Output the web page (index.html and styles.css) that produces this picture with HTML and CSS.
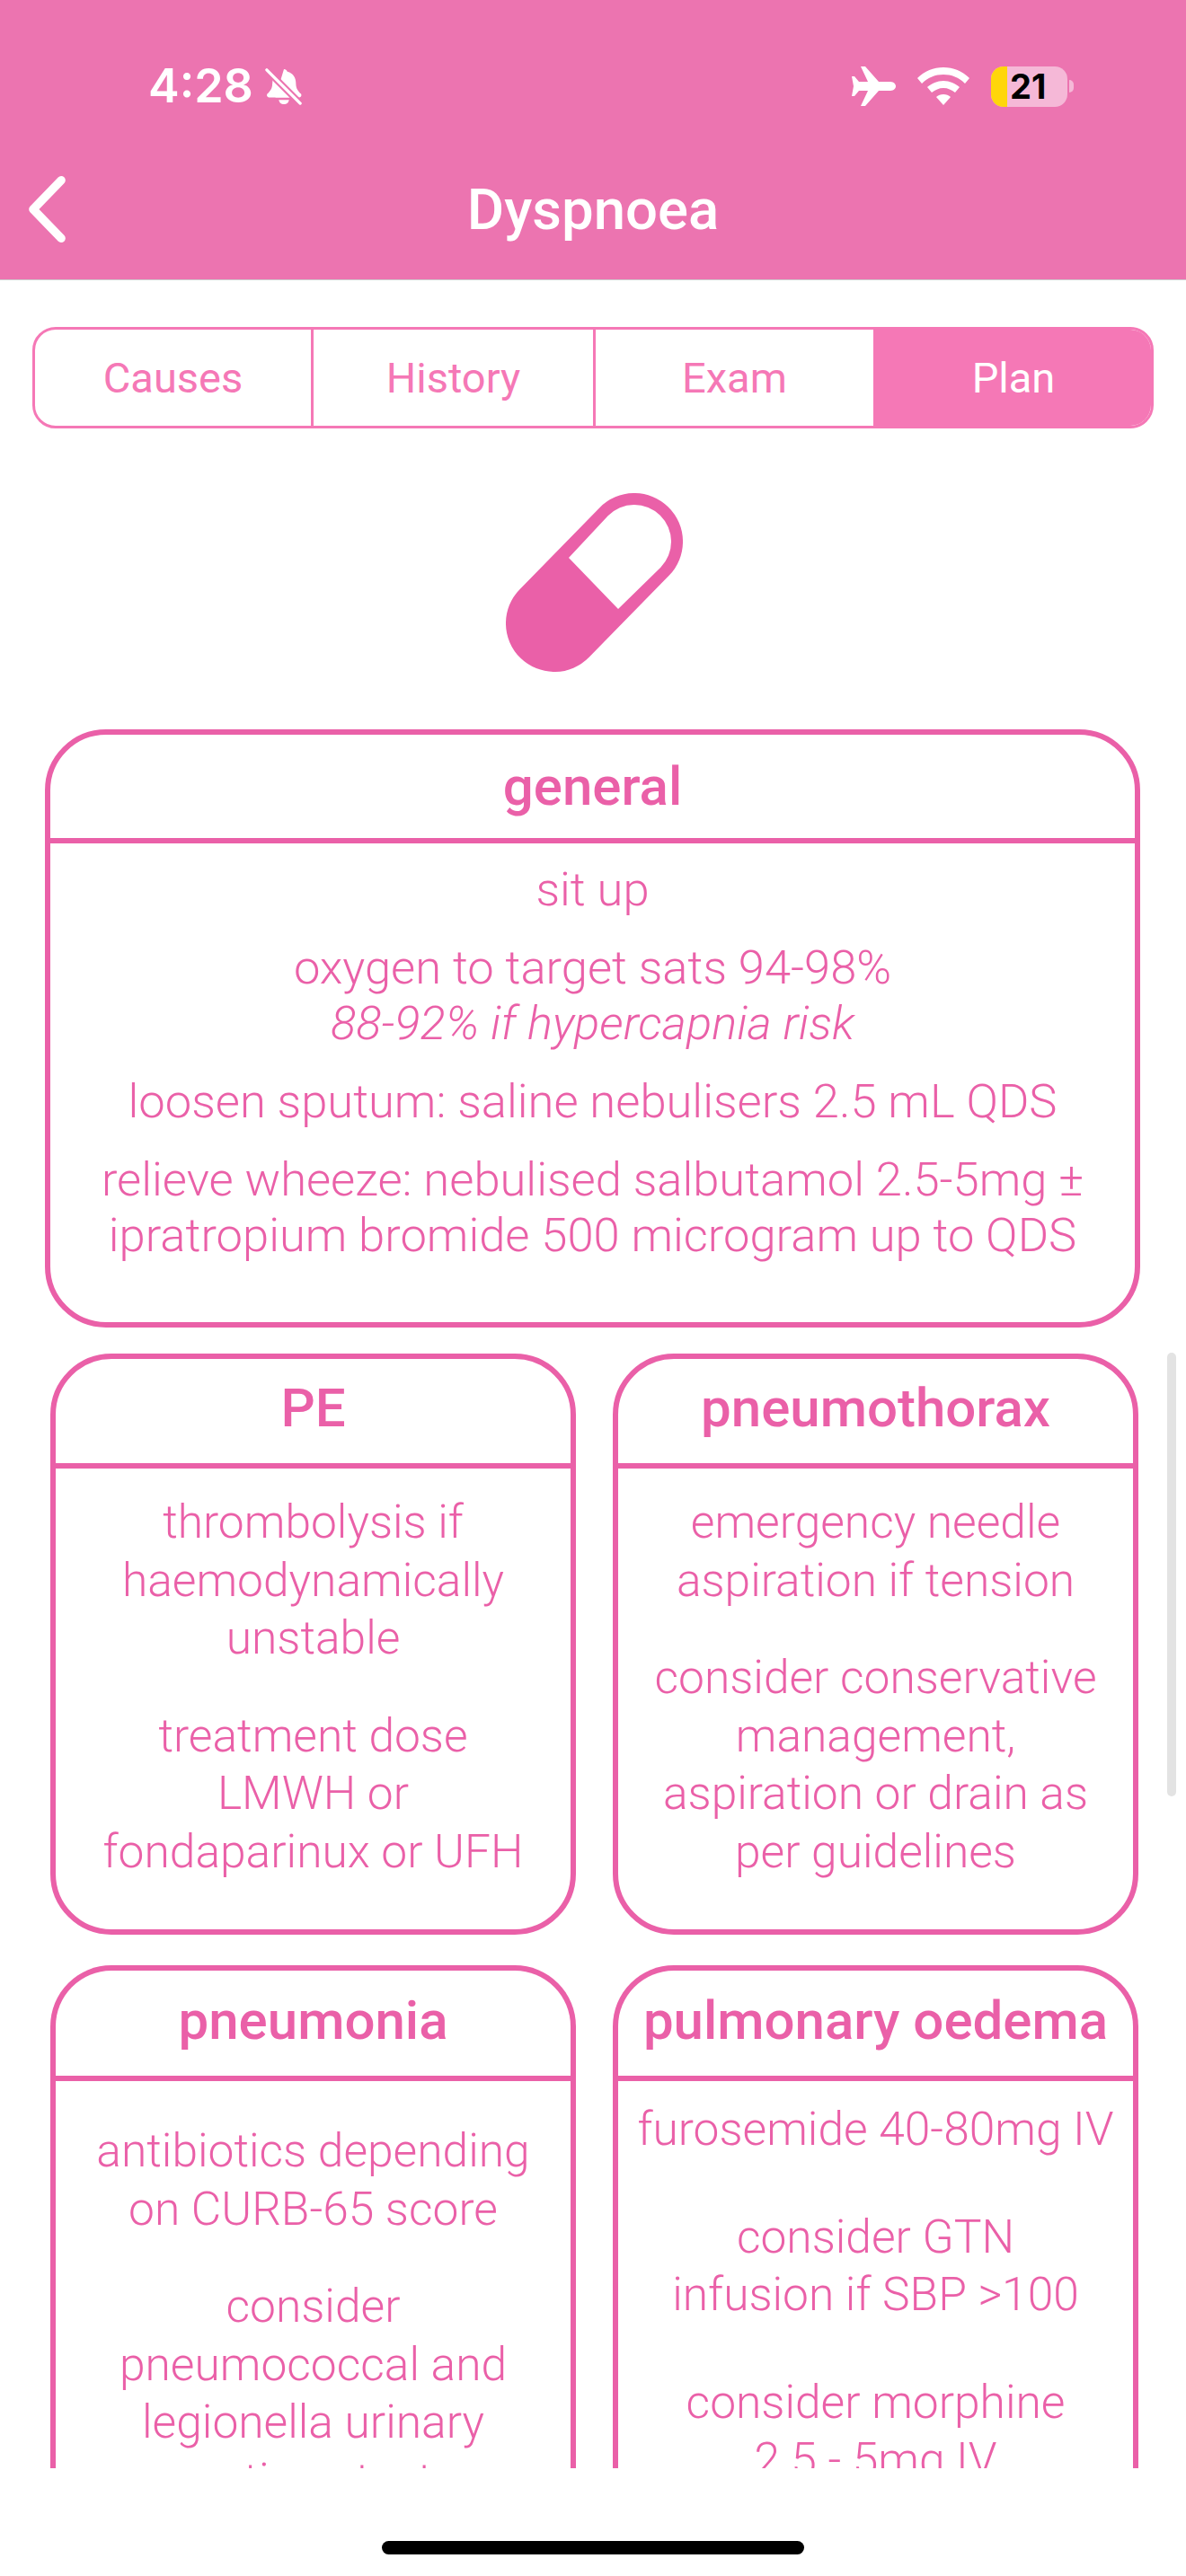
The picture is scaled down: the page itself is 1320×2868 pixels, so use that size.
FILE: index.html
```html
<!DOCTYPE html>
<html lang="en">
<head>
	<meta charset="UTF-8"/>
	<title>Dyspnoea</title>
	<link rel="stylesheet" href="styles.css">
</head>
<body>

<header class="topbar">
	<div class="status">
		<div class="status-left">
			<span class="time">4:28</span>
			<svg class="bell" viewBox="0 0 44 44"><path d="M22 2c2 0 3 1 4 3 7 2 10 7 10 14 0 6 3 9 6 12 1 2 0 4-2 4H12z" fill="#fff"/><path d="M9 14l-.5 5c0 6-3 9-6 12-1 2 0 4 2 4h24z" fill="#fff"/><path d="M16 38h12c-1 4-3 5-6 5s-5-1-6-5z" fill="#fff"/><path d="M2 3l39 39" stroke="#ec74b0" stroke-width="8"/><path d="M2 3l39 39" stroke="#fff" stroke-width="3.5" stroke-linecap="round"/></svg>
		</div>
		<div class="status-right">
			<svg class="plane" viewBox="0 0 50 44"><path d="M11 0h5l15 17h13c4 0 6 3 6 5s-2 5-6 5H31L16 44h-5l8-17H9l-5 6H1l2-11-2-11h3l5 6h10z" fill="#fff"/></svg>
			<svg class="wifi" viewBox="0 0 58 42"><path d="M29 0c11 0 21 4 29 12l-5 6C46 11 38 8 29 8S12 11 5 18L0 12C8 4 18 0 29 0z" fill="#fff"/><path d="M29 15c7 0 13 3 18 7l-5 6c-4-3-8-5-13-5s-9 2-13 5l-5-6c5-4 11-7 18-7z" fill="#fff"/><path d="M29 30c3 0 6 1 8 3l-8 9-8-9c2-2 5-3 8-3z" fill="#fff"/></svg>
			<div class="battery">
				<div class="battery-body"><span class="battery-level"></span><span class="battery-num">21</span></div>
				<span class="battery-cap"></span>
			</div>
		</div>
	</div>
	<div class="navbar">
		<svg class="back" viewBox="0 0 44 70"><path d="M36 6L8 35l28 29" fill="none" stroke="#fff" stroke-width="8.5" stroke-linecap="round" stroke-linejoin="round"/></svg>
		<h1>Dyspnoea</h1>
	</div>
</header>

<nav class="tabs">
	<a>Causes</a>
	<a>History</a>
	<a>Exam</a>
	<a class="active">Plan</a>
</nav>

<main class="scroller">
	<svg class="pill" viewBox="0 0 197 199">
		<path d="M104.4 16.2A54 54 0 0 1 181.6 91.8L92.6 182.8A54 54 0 0 1 15.4 107.2Z" fill="#ea60a8"/>
		<path d="M70 72L113.7 25.3A41 41 0 0 1 172.3 82.7L125 129Z" fill="#fff"/>
	</svg>

	<section class="card card-general">
		<h2>general</h2>
		<div class="card-body">
			<p>sit up</p>
			<p>oxygen to target sats 94-98%<br><em>88-92% if hypercapnia risk</em></p>
			<p>loosen sputum: saline nebulisers 2.5 mL QDS</p>
			<p>relieve wheeze: nebulised salbutamol 2.5-5mg &plusmn;<br>ipratropium bromide 500 microgram up to QDS</p>
		</div>
	</section>

	<div class="grid">
		<section class="card">
			<h2>PE</h2>
			<div class="card-body">
				<p>thrombolysis if<br>haemodynamically<br>unstable</p>
				<p>treatment dose<br>LMWH or<br>fondaparinux or UFH</p>
			</div>
		</section>
		<section class="card">
			<h2>pneumothorax</h2>
			<div class="card-body">
				<p>emergency needle<br>aspiration if tension</p>
				<p>consider conservative<br>management,<br>aspiration or drain as<br>per guidelines</p>
			</div>
		</section>
		<section class="card card-low">
			<h2>pneumonia</h2>
			<div class="card-body body-pneumonia">
				<p>antibiotics depending<br>on CURB-65 score</p>
				<p>consider<br>pneumococcal and<br>legionella urinary<br>antigen test</p>
			</div>
		</section>
		<section class="card card-low">
			<h2>pulmonary oedema</h2>
			<div class="card-body body-oedema">
				<p>furosemide 40-80mg IV</p>
				<p>consider GTN<br>infusion if SBP &gt;100</p>
				<p>consider morphine<br>2.5 - 5mg IV</p>
			</div>
		</section>
	</div>

	<div class="scrollbar"></div>
</main>

<footer class="home">
	<span class="home-bar"></span>
</footer>

</body>
</html>
```

FILE: styles.css
```css
* {box-sizing: border-box;}
html, body {
	margin: 0;
	padding: 0;
}
body {
	background: #fff;
	display: flex;
	flex-direction: column;
	font-family: "Roboto", "Liberation Sans", sans-serif;
	height: 2868px;
	overflow: hidden;
	width: 1320px;
}

/* top bar */
.topbar {
	background: #ec74b0;
	border-bottom: 1px solid #ccc;
	color: #fff;
	height: 312px;
	padding-top: 71px;
}
.status {
	display: flex;
	font-family: "Inter", "Liberation Sans", sans-serif;
	height: 50px;
	justify-content: space-between;
	padding: 0 125px 0 165px;
}
.status-left, .status-right {
	align-items: center;
	display: flex;
}
.time {
	font-size: 52px;
	font-weight: 600;
	line-height: 50px;
}
.bell {
	height: 42px;
	margin-left: 13px;
	width: 42px;
}
.plane {
	height: 44px;
	width: 50px;
}
.wifi {
	height: 42px;
	margin-left: 24px;
	width: 58px;
}
.battery {
	align-items: center;
	display: flex;
	margin-left: 24px;
}
.battery-body {
	background: #f5b8d7;
	border-radius: 14px;
	display: flex;
	height: 45px;
	overflow: hidden;
	position: relative;
	width: 85px;
}
.battery-level {
	background: #ffd60a;
	width: 18px;
}
.battery-num {
	color: #000;
	font-size: 38px;
	font-weight: 700;
	left: 21px;
	line-height: 45px;
	position: absolute;
}
.battery-cap {
	background: #f5b8d7;
	border-radius: 0 8px 8px 0;
	height: 14px;
	margin-left: 2px;
	width: 5px;
}
.navbar {
	align-items: center;
	display: flex;
	height: 78px;
	justify-content: center;
	margin-top: 73px;
	position: relative;
}
.back {
	height: 78px;
	left: 28px;
	position: absolute;
	top: 0;
	width: 49px;
}
.navbar h1 {
	font-size: 63.5px;
	font-weight: 500;
	margin: 0;
}

/* tabs */
.tabs {
	border: 3px solid #f578b6;
	border-radius: 26px;
	display: grid;
	grid-template-columns: 310px 314px 312px 1fr;
	height: 113px;
	margin: 52px 36px 0;
	overflow: hidden;
}
.tabs a {
	align-items: center;
	border-right: 3px solid #f578b6;
	color: #f578b6;
	display: flex;
	font-size: 47px;
	font-weight: 450;
	justify-content: center;
}
.tabs a:last-child {
	border-right: 0;
}
.tabs a.active {
	background: #f578b6;
	color: #fff;
}

/* scrolling content */
.scroller {
	flex: 1;
	overflow: hidden;
	position: relative;
	text-align: center;
}
.pill {
	display: block;
	height: 199px;
	margin: 72px auto 0;
	transform: translateX(1px);
	width: 197px;
}
.card {
	background: #fff;
	border: 6px solid #ea60a8;
	border-radius: 68px;
	color: #ea60a8;
}
.card h2 {
	border-bottom: 6px solid #ea60a8;
	font-size: 60px;
	font-weight: 500;
	height: 121px;
	line-height: 116px;
	margin: 0;
}
.card p {
	font-size: 52.5px;
	font-weight: 300;
	line-height: 62px;
	margin: 0 0 25px;
}
.card-general {
	height: 666px;
	margin: 64px 51px 0 50px;
}
.card-general .card-body {
	padding-top: 20px;
}
.grid {
	display: grid;
	gap: 34px 41px;
	grid-template-columns: 585px 585px;
	margin: 29px 0 0 56px;
}
.grid .card {
	height: 647px;
}
.grid .card h2 {
	height: 122px;
	line-height: 110px;
}
.grid .card p {
	font-size: 51.5px;
	line-height: 64.5px;
	margin-bottom: 44px;
}
.grid .card-body {
	padding-top: 28px;
}
.grid .card-low {
	border-bottom: 0;
	border-radius: 68px 68px 0 0;
	height: 700px;
}
.grid .card-low h2 {
	height: 123px;
	line-height: 112px;
}
.grid .body-pneumonia {
	padding-top: 46px;
}
.grid .body-oedema {
	padding-top: 22px;
}
.grid .body-oedema p {
	margin-bottom: 55px;
}
.scrollbar {
	background: #e3e3e3;
	border-radius: 5px;
	height: 494px;
	position: absolute;
	right: 11px;
	top: 1029px;
	width: 10px;
}

/* home indicator */
.home {
	display: flex;
	height: 120px;
	justify-content: center;
	padding-top: 81px;
}
.home-bar {
	background: #000;
	border-radius: 8px;
	height: 15px;
	width: 470px;
}
```
